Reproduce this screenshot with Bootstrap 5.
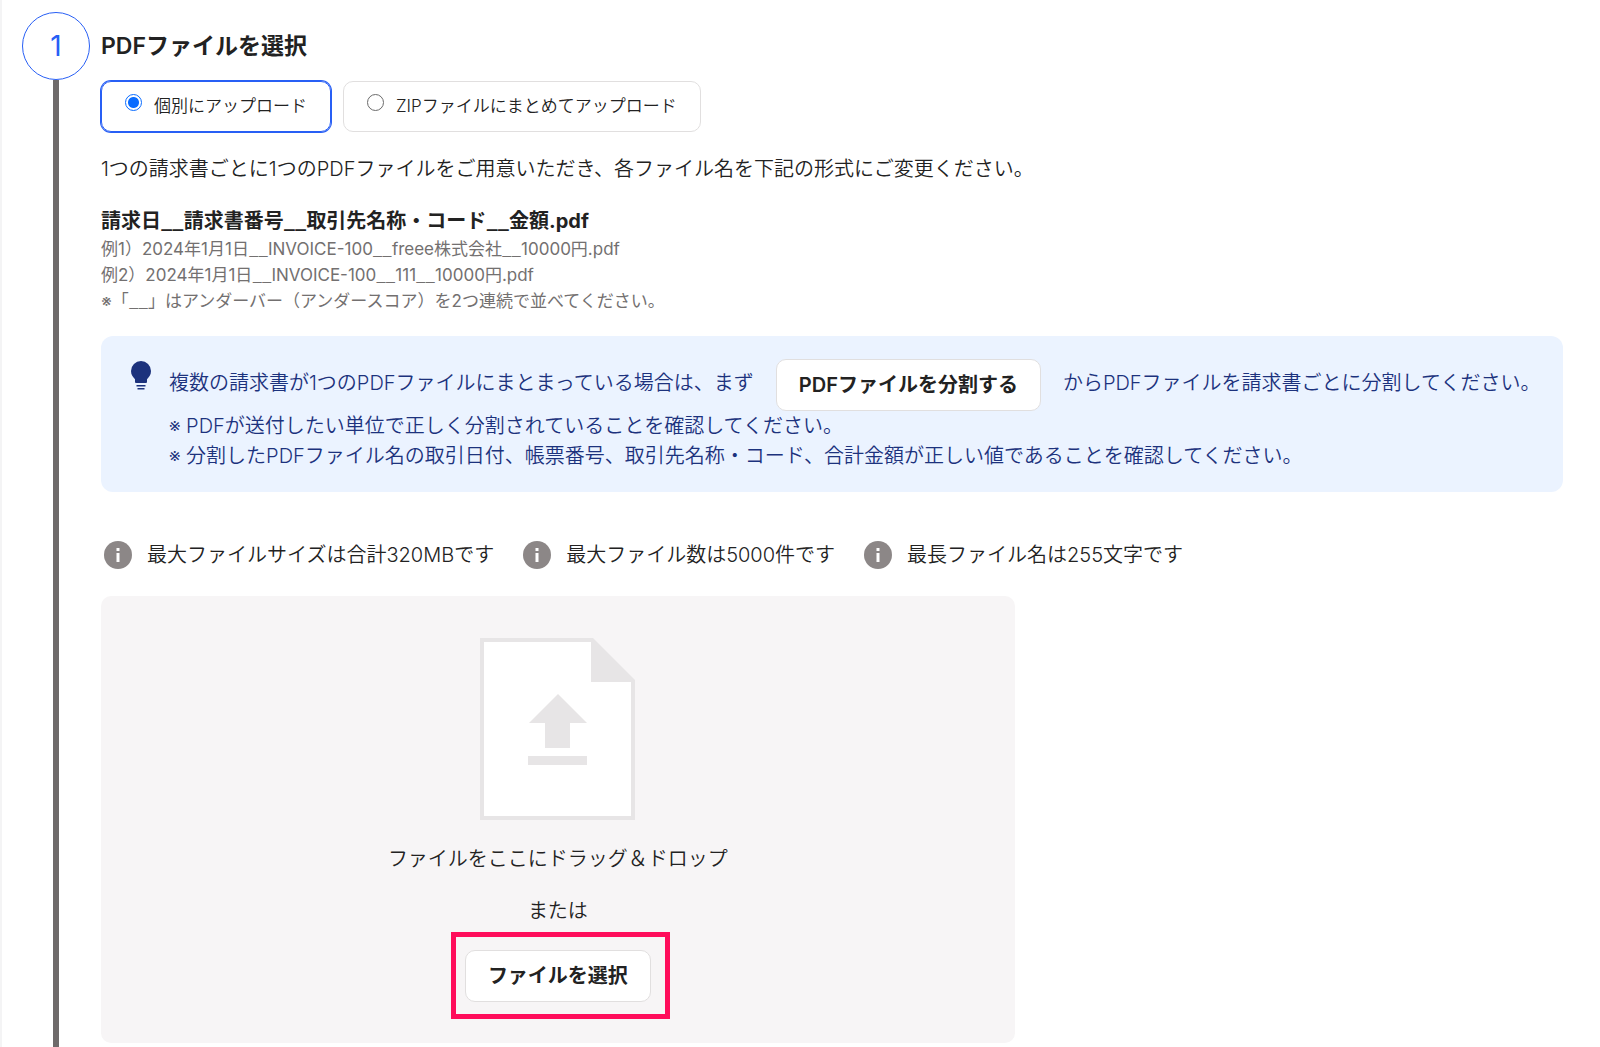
<!DOCTYPE html>
<html lang="ja">
<head>
<meta charset="utf-8">
<meta name="viewport" content="width=device-width, initial-scale=1">
<title>PDFファイルを選択</title>
<link href="https://cdn.jsdelivr.net/npm/bootstrap@5.3.0/dist/css/bootstrap.min.css" rel="stylesheet">
<style>
body{font-family:Inter,"Noto Sans CJK JP",sans-serif;font-size:20px;line-height:30px;color:#222;font-weight:350;background:#fff}
.step-page{border-left:2px solid #f4f4f5;padding:12px 37px 4px 20px}
.step-rail{width:68px;margin-bottom:-4px}
.step-number{width:68px;height:68px;border:1px solid #285ff5;border-radius:50%;color:#285ff5;font-size:28px;font-weight:400}
.step-line{width:6px;background:#6e6a6a}
.step-body{margin-left:11px;min-width:0}
.step-title{font-size:23px;line-height:34px;font-weight:600;margin:17px 0 18px}
.mode-list{gap:12px}
.mode-option{font-size:17px;line-height:26px;border:1px solid #e1dfdf;border-radius:10px;padding:11px 23px 12px;gap:12px;cursor:pointer}
.mode-option.selected{border-color:#285ff5;box-shadow:0 0 0 1px #285ff5}
.mode-option input{appearance:none;width:17px;height:17px;margin:1px 0 0;border:1px solid #6b6b6b;border-radius:50%;background:#fff}
.mode-option input:checked{border-color:#0a6cff;background:radial-gradient(circle,#0a6cff 0 5px,#fff 6px)}
.naming-rule{margin:22px 0}
.file-pattern{font-weight:700;margin:0}
.wide-bar{font-family:"Noto Sans CJK JP",sans-serif;line-height:1}
.file-samples{font-size:17px;line-height:26px;color:#737070;font-weight:400}
.split-tip{background:#ebf3ff;color:#1c327d;border-radius:12px;padding:23px 16px 21px 28px;margin-top:22px;gap:16px}
.tip-row{gap:22px}
.tip-row span{padding-bottom:4px}
.btn-plain{background:#fff;border:1px solid #e1dfdf;border-radius:10px;color:#222;font-size:20px;line-height:30px;font-weight:600;padding:10px 22px;white-space:nowrap}
.btn-plain:hover{background:#f7f5f6;border-color:#e1dfdf}
.limit-list{gap:29px;margin:48px 3px 26px}
.limit-list li{gap:15px}
.drop-area{width:62.5%;background:#f7f5f6;border-radius:10px;padding:42px 24px 41px}
.drop-text{margin:24px 0 22px}
.pick-mark{margin-top:24px}
.pick-mark::after{content:"";position:absolute;inset:-18px -19px -17px -14px;border:5px solid #ff0d5b;pointer-events:none}
</style>
<script src="https://cdn.jsdelivr.net/npm/bootstrap@5.3.0/dist/js/bootstrap.bundle.min.js"></script>
</head>
<body>
<main class="step-page d-flex min-vh-100">
  <div class="step-rail d-flex flex-column align-items-center flex-shrink-0">
    <div class="step-number d-flex align-items-center justify-content-center flex-shrink-0">1</div>
    <div class="step-line flex-grow-1"></div>
  </div>
  <section class="step-body flex-grow-1">
    <h1 class="step-title">PDFファイルを選択</h1>
    <div class="mode-list d-flex flex-wrap">
      <label class="mode-option selected d-flex align-items-start" for="mode-single"><input type="radio" name="mode" id="mode-single" checked><span>個別にアップロード</span></label>
      <label class="mode-option d-flex align-items-start" for="mode-zip"><input type="radio" name="mode" id="mode-zip"><span>ZIPファイルにまとめてアップロード</span></label>
    </div>
    <p class="naming-rule">1つの請求書ごとに1つのPDFファイルをご用意いただき、各ファイル名を下記の形式にご変更ください。</p>
    <p class="file-pattern">請求日<span class="wide-bar">__</span>請求書番号<span class="wide-bar">__</span>取引先名称・コード<span class="wide-bar">__</span>金額.pdf</p>
    <div class="file-samples">
      <div>例1）2024年1月1日<span class="wide-bar">__</span>INVOICE-100<span class="wide-bar">__</span>freee株式会社<span class="wide-bar">__</span>10000円.pdf</div>
      <div>例2）2024年1月1日<span class="wide-bar">__</span>INVOICE-100<span class="wide-bar">__</span>111<span class="wide-bar">__</span>10000円.pdf</div>
      <div>※「<span class="wide-bar">__</span>」はアンダーバー（アンダースコア）を2つ連続で並べてください。</div>
    </div>
    <div class="split-tip d-flex align-items-start">
      <svg class="flex-shrink-0" width="24" height="32" viewBox="0 0 24 32" aria-hidden="true"><path fill="#1c327d" d="M12 2a10 10 0 0 0-10 10c0 4 2 6 4 8.200V23q0 1 1 1h10q1 0 1-1v-2.800c2-2.200 4-4.200 4-8.200A10 10 0 0 0 12 2zM7.500 26h9v1.500h-9zM8.500 29h7v1.500h-7z"/></svg>
      <div>
        <div class="tip-row d-flex align-items-center">
          <span>複数の請求書が1つのPDFファイルにまとまっている場合は、まず</span>
          <button type="button" class="btn btn-plain">PDFファイルを分割する</button>
          <span>からPDFファイルを請求書ごとに分割してください。</span>
        </div>
        <div>※ PDFが送付したい単位で正しく分割されていることを確認してください。</div>
        <div>※ 分割したPDFファイル名の取引日付、帳票番号、取引先名称・コード、合計金額が正しい値であることを確認してください。</div>
      </div>
    </div>
    <ul class="limit-list list-unstyled d-flex flex-wrap">
      <li class="d-flex align-items-center"><svg width="28" height="28" viewBox="0 0 28 28" aria-hidden="true"><circle cx="14" cy="14" r="14" fill="#8c8787"/><path fill="#fff" d="M12.500 7h3v3h-3zM12.500 12h3v9h-3z"/></svg><span>最大ファイルサイズは合計320MBです</span></li>
      <li class="d-flex align-items-center"><svg width="28" height="28" viewBox="0 0 28 28" aria-hidden="true"><circle cx="14" cy="14" r="14" fill="#8c8787"/><path fill="#fff" d="M12.500 7h3v3h-3zM12.500 12h3v9h-3z"/></svg><span>最大ファイル数は5000件です</span></li>
      <li class="d-flex align-items-center"><svg width="28" height="28" viewBox="0 0 28 28" aria-hidden="true"><circle cx="14" cy="14" r="14" fill="#8c8787"/><path fill="#fff" d="M12.500 7h3v3h-3zM12.500 12h3v9h-3z"/></svg><span>最長ファイル名は255文字です</span></li>
    </ul>
    <div class="drop-area d-flex flex-column align-items-center text-center">
      <svg width="155" height="182" viewBox="0 0 155 182" aria-hidden="true"><path fill="#e7e5e6" d="M0 0H113L155 42V182H0z"/><path fill="#fff" d="M4 4H111V44H151V178H4z"/><path fill="#e7e5e6" d="M78 56L107 85H90V110H65V85H49zM48 118H107V127H48z"/></svg>
      <p class="drop-text">ファイルをここにドラッグ＆ドロップ</p>
      <p class="m-0">または</p>
      <div class="pick-mark position-relative"><button type="button" class="btn btn-plain">ファイルを選択</button></div>
    </div>
  </section>
</main>
</body>
</html>
